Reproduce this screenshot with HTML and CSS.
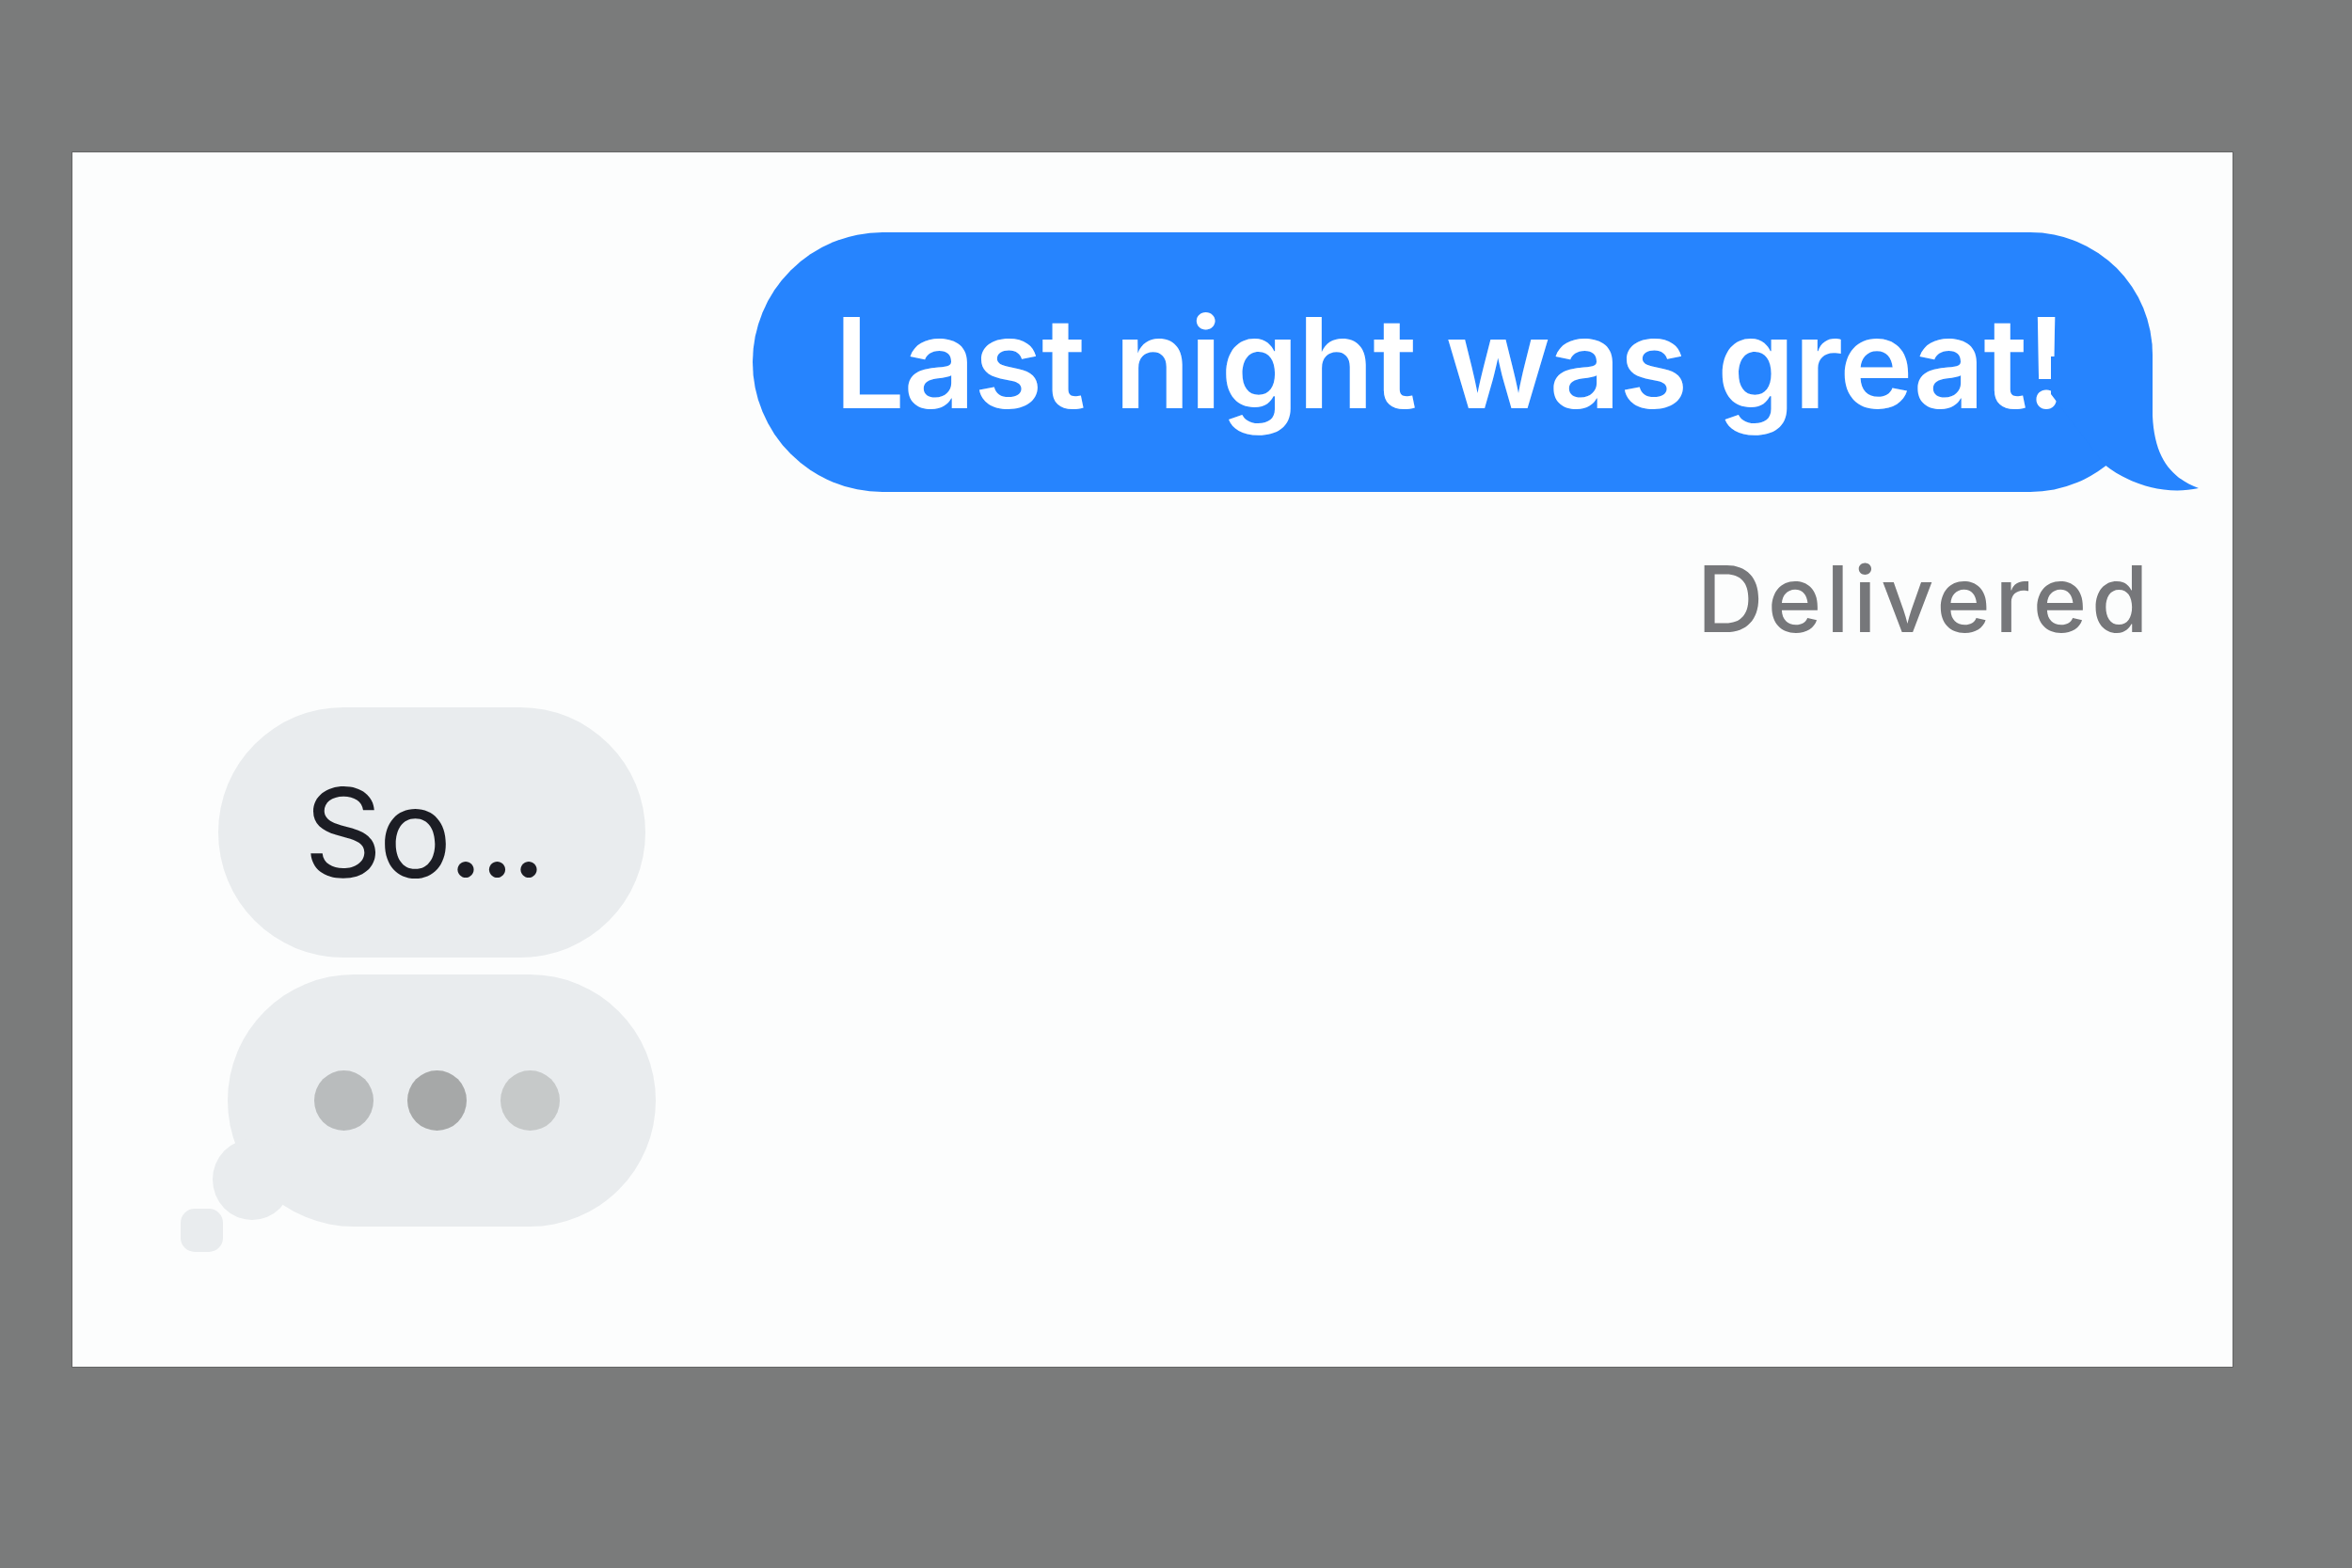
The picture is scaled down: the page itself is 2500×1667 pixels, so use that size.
FILE: index.html
```html
<!DOCTYPE html>
<html lang="en">
<head>
    <meta charset="UTF-8">
    <meta name="viewport" content="width=device-width, initial-scale=1.0">
    <title>Messages</title>
    <link rel="stylesheet" href="styles.css">
</head>
<body>

    <div class="chat">
        <div class="row row-out">
            <div class="bubble bubble-out">
                <span class="bubble-text">Last night was great!</span>
                <svg class="tail-out" viewBox="0 0 160 146" width="160" height="146">
                    <path d="M110 2 L110 65 C112 112 132 132 159 142 C122 150 84 137 59 117 L2 42 L2 2 Z" fill="#2684fe"/>
                </svg>
            </div>
        </div>
        <div class="status">Delivered</div>

        <div class="bubble bubble-in">So...</div>

        <!-- Typing indicator -->
        <div class="bubble bubble-typing">
            <span class="dot dot-1"></span>
            <span class="dot dot-2"></span>
            <span class="dot dot-3"></span>
        </div>
    </div>

</body>
</html>
```

FILE: styles.css
```css
* {
    margin: 0;
    padding: 0;
    box-sizing: border-box;
}

body {
    background: #7a7b7b;
    font-family: 'Inter', 'Noto Sans', sans-serif;
    height: 100vh;
    padding: 162px 0 0 77px;
}

.chat {
    width: 2296px;
    height: 1291px;
    background: #fcfdfd;
    box-shadow: 0 0 0 1px rgba(60, 60, 60, 0.35);
    display: flex;
    flex-direction: column;
    align-items: flex-start;
    padding: 85px 85px 0 155px;
}

.row {
    display: flex;
    width: 100%;
}

.row-out {
    justify-content: flex-end;
}

.bubble {
    display: flex;
    align-items: center;
    position: relative;
}

.bubble-out {
    height: 276px;
    padding: 0 93px 0 87px;
    background: #2684fe;
    color: #ffffff;
    border-radius: 138px 130px 130px 138px;
}

.bubble-text {
    font-size: 133px;
    font-weight: 600;
    line-height: 1;
    letter-spacing: -1.5px;
    white-space: nowrap;
}

.tail-out {
    position: absolute;
    right: -50px;
    bottom: 0;
    overflow: visible;
}

.status {
    align-self: flex-end;
    margin: 65px 0 0 0;
    font-size: 98px;
    font-weight: 500;
    line-height: 1;
    letter-spacing: 4.5px;
    color: #76777a;
}

.bubble-in {
    margin-top: 66px;
    width: 454px;
    height: 266px;
    padding-left: 91px;
    background: #e9ecee;
    border-radius: 133px;
    font-size: 130px;
    font-weight: 400;
    line-height: 1;
    letter-spacing: -4px;
    color: #1c1d24;
}

.bubble-typing {
    margin: 18px 0 0 10px;
    width: 455px;
    height: 268px;
    padding-left: 92px;
    gap: 36px;
    background: #e9ecee;
    border-radius: 134px;
}

/* little thought-bubble tail */
.bubble-typing::before,
.bubble-typing::after {
    content: '';
    position: absolute;
    background: #e9ecee;
}

.bubble-typing::before {
    left: -16px;
    top: 175px;
    width: 84px;
    height: 86px;
    border-radius: 50%;
}

.bubble-typing::after {
    left: -50px;
    top: 249px;
    width: 45px;
    height: 46px;
    border-radius: 15px;
}

.dot {
    width: 63px;
    height: 64px;
    border-radius: 50%;
}

.dot-1 { background: #b9bcbd; }
.dot-2 { background: #a6a8a8; }
.dot-3 { background: #c6c9c9; }
```
